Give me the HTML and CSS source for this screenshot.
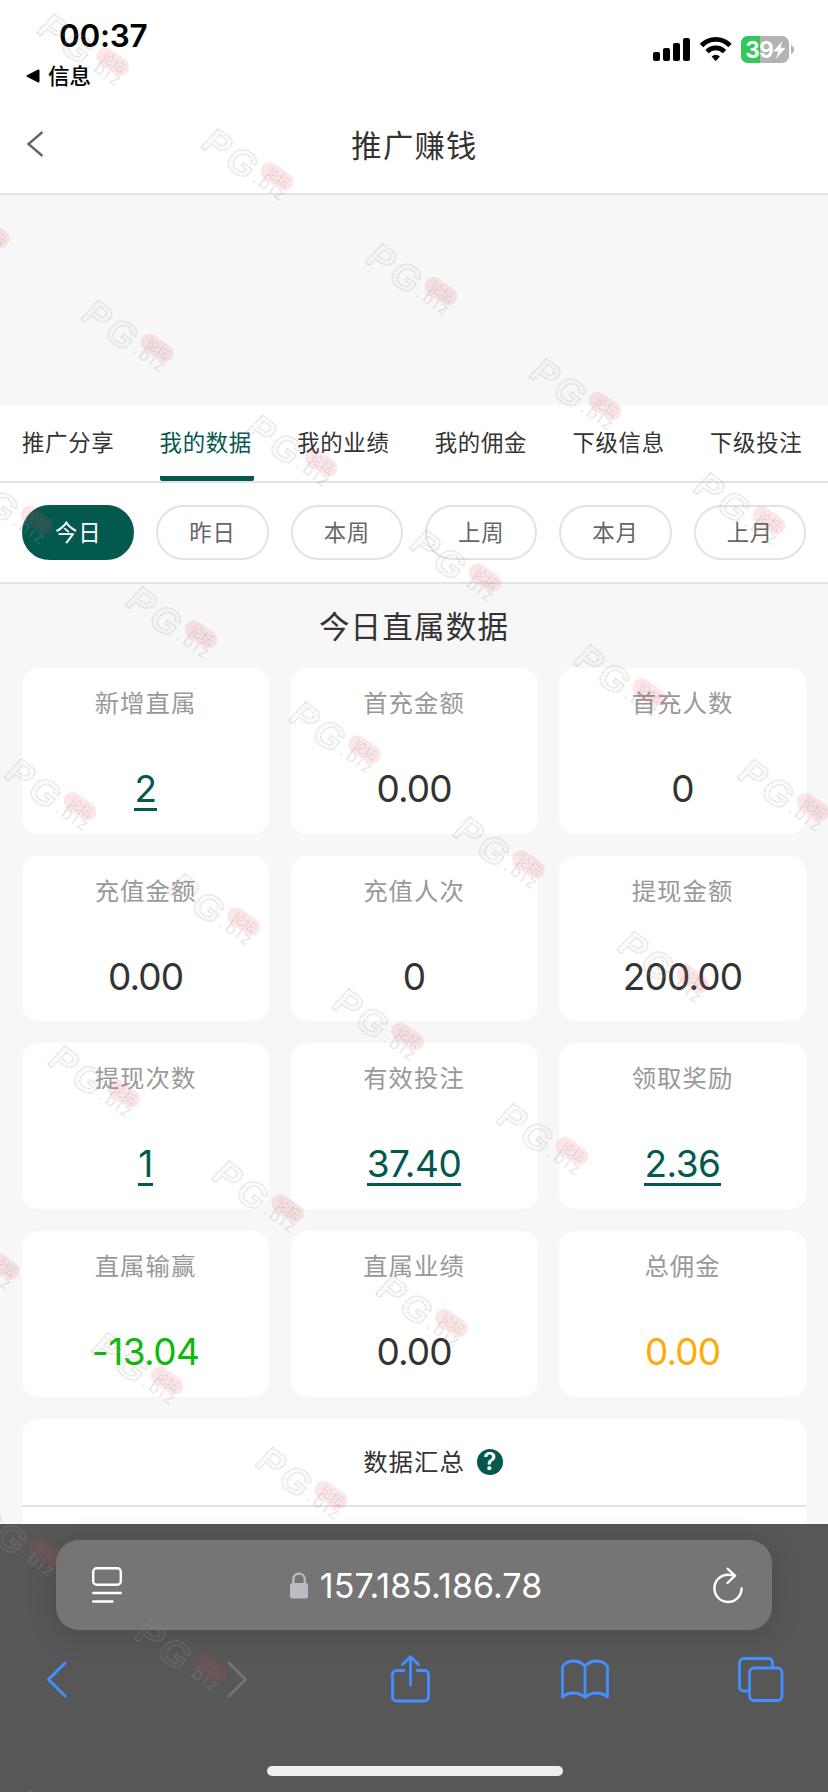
FILE: index.html
```html
<!DOCTYPE html>
<html lang="zh-CN">
<head>
<meta charset="utf-8">
<meta name="viewport" content="width=device-width">
<title>推广赚钱</title>
<link rel="stylesheet" href="styles.css">
</head>
<body>
<div class="screen">
  <header class="status">
    <div class="status-left">
      <div class="time">00:37</div>
      <div class="back-app">
        <svg width="14" height="14" viewBox="0 0 14 14"><path d="M1 6.2 11.6.8Q13.500 0 13.500 1.800v10.400q0 1.800-1.900 1L1 7.800Q-.4 7 1 6.200z" fill="#000"/></svg>
        <span>信息</span>
      </div>
    </div>
    <svg class="status-icons" width="142" height="28" viewBox="0 0 142 28">
      <rect x="0" y="16" width="7" height="9" rx="2"/><rect x="10" y="12" width="7" height="13" rx="2"/><rect x="20" y="7" width="7" height="18" rx="2"/><rect x="30" y="2" width="7" height="23" rx="2"/>
      <g fill="none" stroke="#000" stroke-width="4.800"><path d="M48.500 9.500C56.500 1.200 69 1.200 77 9.500"/><path d="M54 15.600C59 10.600 66.500 10.600 71.500 15.600"/></g>
      <path d="M58.600 20.500Q62.700 17 66.900 20.500L63.400 24.400Q62.700 25.200 62 24.400z"/>
      <rect x="88" y="0" width="48" height="27" rx="7" fill="#b3b3b3"/>
      <path d="M95 0H107V27H95A7 7 0 0 1 88 20V7A7 7 0 0 1 95 0z" fill="#34c759"/>
      <path d="M138 9Q141 10.500 141 13.500T138 18z" fill="#b3b3b3"/>
      <text class="battery" x="92.300" y="21.500">39</text>
      <path d="M129.500 5 121 14.500q-.6.9.4.9h4L123 22.500 132 12.700q.7-1-.5-1h-4z" fill="#fff"/>
    </svg>
  </header>
  <nav class="titlebar">
    <svg class="back" width="18" height="28" viewBox="0 0 18 28"><path d="M16.500 2 2.500 14l14 12" fill="none" stroke="#666" stroke-width="2.400"/></svg>
    <h1>推广赚钱</h1>
  </nav>
  <div class="banner"></div>
  <nav class="tabs">
    <span>推广分享</span><span class="active">我的数据</span><span>我的业绩</span><span>我的佣金</span><span>下级信息</span><span>下级投注</span>
  </nav>
  <div class="filters">
    <span class="on">今日</span><span>昨日</span><span>本周</span><span>上周</span><span>本月</span><span>上月</span>
  </div>
  <main>
    <h2>今日直属数据</h2>
    <div class="grid">
      <div class="card"><label>新增直属</label><b class="link">2</b></div>
      <div class="card"><label>首充金额</label><b>0.00</b></div>
      <div class="card"><label>首充人数</label><b>0</b></div>
      <div class="card"><label>充值金额</label><b>0.00</b></div>
      <div class="card"><label>充值人次</label><b>0</b></div>
      <div class="card"><label>提现金额</label><b>200.00</b></div>
      <div class="card"><label>提现次数</label><b class="link">1</b></div>
      <div class="card"><label>有效投注</label><b class="link">37.40</b></div>
      <div class="card"><label>领取奖励</label><b class="link">2.36</b></div>
      <div class="card"><label>直属输赢</label><b class="green">-13.04</b></div>
      <div class="card"><label>直属业绩</label><b>0.00</b></div>
      <div class="card"><label>总佣金</label><b class="orange">0.00</b></div>
    </div>
    <section class="summary">
      <div class="summary-head"><span>数据汇总</span><i>?</i></div>
    </section>
  </main>
  <footer class="browser">
    <div class="url">
      <svg width="30" height="36" viewBox="0 0 30 36" fill="none" stroke="#fff" stroke-width="2.400" stroke-linecap="round"><rect x="1.200" y="1.200" width="27.600" height="16.600" rx="3.500"/><path d="M1.200 26h27.600M1.200 34.500h19.300"/></svg>
      <div class="address">
        <svg width="18" height="27" viewBox="0 0 18 27"><path d="M3.300 13V7.500C3.300-.3 14.700-.3 14.700 7.500V13" fill="none" stroke="#bcbbc3" stroke-width="2.200"/><rect y="11" width="18" height="15.500" rx="2.500" fill="#bcbbc3"/></svg>
        <span>157.185.186.78</span>
      </div>
      <svg width="30" height="37" viewBox="0 0 30 37" fill="none" stroke="#fff" stroke-width="2.400" stroke-linecap="round" stroke-linejoin="round"><path d="M20.500 8.300Q18 7.800 15.500 7.800A13.600 13.600 0 1 0 28.600 21.500"/><path d="M14.500 1.700 22 8.600 14.500 16"/></svg>
    </div>
    <div class="tools">
      <svg width="21" height="37" viewBox="0 0 21 37"><path d="M19 2 2.500 18.500 19 35" fill="none" stroke="#438fff" stroke-width="3" stroke-linecap="round" stroke-linejoin="round"/></svg>
      <svg width="21" height="37" viewBox="0 0 21 37"><path d="M2 2 18.500 18.500 2 35" fill="none" stroke="#737373" stroke-width="3" stroke-linecap="round" stroke-linejoin="round"/></svg>
      <svg width="39" height="48" viewBox="0 0 39 48" fill="none" stroke="#438fff" stroke-width="2.800" stroke-linecap="round" stroke-linejoin="round"><path d="M13 15.500H6Q1.500 15.500 1.500 20V41.500Q1.500 46 6 46H33Q37.500 46 37.500 41.500V20Q37.500 15.500 33 15.500H26M19.500 30V2M11.500 9.500l8-8 8 8"/></svg>
      <svg width="48" height="40" viewBox="0 0 48 40" fill="none" stroke="#438fff" stroke-width="2.800" stroke-linecap="round" stroke-linejoin="round"><path d="M24 7Q19 2 12.500 2 5.500 2 1.500 7.500V38Q6 34 12.500 34 19 34 24 38.500 29 34 35.500 34 42 34 46.500 38V7.500Q42.500 2 35.500 2 29 2 24 7zV38"/></svg>
      <svg width="46" height="45" viewBox="0 0 46 45" fill="none" stroke="#438fff" stroke-width="2.800"><path d="M10.500 34H6Q1.500 34 1.500 29.500V6Q1.500 1.500 6 1.500H30Q34.500 1.500 34.500 6V10.500"/><rect x="11.500" y="11" width="32.500" height="32.500" rx="4.500"/></svg>
    </div>
    <div class="home"></div>
  </footer>

  <svg class="watermark" width="828" height="1792" viewBox="0 0 828 1792">
    <defs>
      <g id="wm">
        <text class="wm-big" transform="translate(-17 19) rotate(37) skewX(-6)">PG</text>
        <text class="wm-small" transform="translate(35 54) rotate(35)">.biz</text>
        <rect class="wm-pill" x="-18" y="-9" width="36" height="18" rx="9" transform="translate(61 49.500) rotate(35)"/>
        <text class="wm-cn" transform="translate(50.500 44) rotate(35)">论坛</text>
      </g>
    </defs>
    <use href="#wm" x="51.700" y="12.300"/><use href="#wm" x="216" y="127"/><use href="#wm" x="380" y="241.700"/><use href="#wm" x="544" y="356.500"/><use href="#wm" x="708" y="471"/>
    <use href="#wm" x="-68" y="184"/><use href="#wm" x="96" y="298.600"/><use href="#wm" x="260" y="413.300"/><use href="#wm" x="424" y="528"/><use href="#wm" x="588" y="643"/><use href="#wm" x="752" y="757.500"/>
    <use href="#wm" x="-24" y="470.500"/><use href="#wm" x="140" y="585"/><use href="#wm" x="303.500" y="700"/><use href="#wm" x="467.500" y="815"/><use href="#wm" x="632" y="929.500"/>
    <use href="#wm" x="19" y="757"/><use href="#wm" x="182.500" y="872"/><use href="#wm" x="346.500" y="987"/><use href="#wm" x="511" y="1101.500"/>
    <use href="#wm" x="62.500" y="1044"/><use href="#wm" x="226.500" y="1159"/><use href="#wm" x="390.500" y="1273.500"/>
    <use href="#wm" x="-58" y="1216"/><use href="#wm" x="106" y="1331"/><use href="#wm" x="270" y="1445.500"/>
    <use href="#wm" x="-15" y="1503"/><use href="#wm" x="149" y="1618"/><use href="#wm" x="28" y="1789"/>
  </svg>
</div>
</body>
</html>
```
FILE: styles.css
```css
* { box-sizing: border-box; }
body { margin: 0; background: #f7f7f7; color: #333; font-family: Inter, "Noto Sans CJK SC", sans-serif; }
svg { display: block; flex: none; }
.screen { position: relative; width: 828px; height: 1792px; overflow: hidden; display: flex; flex-direction: column; }

.status { height: 98px; flex: none; background: #fff; display: flex; justify-content: space-between; padding: 0 33px 0 26px; color: #000; }
.time { margin: 16px 0 0 33px; font-size: 31.5px; line-height: 40px; font-weight: 600; letter-spacing: -.3px; }
.back-app { display: flex; align-items: center; gap: 8px; margin-top: 7px; font-size: 21.5px; line-height: 26px; font-weight: 500; }
.status-icons { margin-top: 36px; }
.battery { font: 700 22.5px Inter, sans-serif; fill: #fff; letter-spacing: -.5px; }

.titlebar { height: 97px; flex: none; background: #fff; border-bottom: 2px solid #e3e3e3; display: flex; align-items: center; padding: 0 26px; }
.titlebar .back { margin-bottom: 3px; }
h1 { flex: 1; margin: 0 17px 4px 0; text-align: center; font-size: 30.3px; font-weight: 400; letter-spacing: 1.3px; }
.banner { height: 210px; flex: none; }

.tabs { height: 78px; flex: none; background: #fff; border-bottom: 2px solid #e3e3e3; display: flex; gap: 43.6px; padding-left: 22px; font-size: 22.4px; letter-spacing: .7px; line-height: 76px; }
.tabs span { width: 94px; flex: none; white-space: nowrap; }
.tabs .active { color: #04594f; background: linear-gradient(#04594f, #04594f) bottom / 100% 5px no-repeat; border-radius: 2px; }

.filters { height: 101px; flex: none; background: #fff; border-bottom: 2px solid #e3e3e3; display: grid; grid-template-columns: repeat(6, 1fr); gap: 22px; padding: 22px; color: #666; }
.filters span { height: 55px; line-height: 51px; border: 2px solid #e3e3e3; border-radius: 28px; text-align: center; font-size: 22.4px; letter-spacing: .8px; }
.filters .on { background: #04594f; border-color: #04594f; color: #fff; }

main { flex: 1; padding: 0 22px; min-height: 0; }
h2 { margin: 0; height: 84px; line-height: 86px; text-align: center; font-size: 30.5px; font-weight: 400; letter-spacing: 1.2px; }
.grid { display: grid; grid-template-columns: repeat(3, 1fr); grid-auto-rows: 165.7px; gap: 22px 21.5px; }
.card { background: #fff; border-radius: 16px; display: flex; flex-direction: column; align-items: center; padding-top: 17px; }
.card label { font-size: 24.4px; line-height: 36px; letter-spacing: 1px; color: #999; }
.card b { font-weight: 400; font-size: 37px; line-height: 44px; margin-top: 46px; letter-spacing: -.9px; }
.card .link { color: #04594f; height: 44px; border-bottom: 3px solid #04594f; letter-spacing: -.5px; }
.card .green { color: #0bb90b; letter-spacing: -.6px; }
.card .orange { color: #ffaa09; }
.summary { margin-top: 22px; height: 120px; background: #fff; border-radius: 16px 16px 0 0; }
.summary-head { height: 88px; border-bottom: 2px solid #e3e3e3; display: flex; align-items: center; justify-content: center; gap: 12px; font-size: 24.4px; letter-spacing: 1px; padding: 0 0 2px 38px; }
.summary-head i { width: 26px; height: 26px; border-radius: 50%; background: #04594f; color: #fff; font: 600 24px/25px Inter, sans-serif; text-align: center; letter-spacing: 0; margin-top: 3px; }

.browser { height: 268px; flex: none; background: #575757; padding: 16px 44px 0 46px; display: flex; flex-direction: column; position: relative; color: #fff; }
.url { margin: 0 12px 0 10px; height: 90px; border-radius: 23px; background: #757575; box-shadow: 0 4px 32px rgba(0,0,0,.14); display: flex; justify-content: space-between; align-items: center; padding: 0 29px 0 36px; }
.address { display: flex; align-items: center; gap: 12px; font-size: 34px; letter-spacing: .05px; margin-right: 3px; }
.tools { display: flex; align-items: center; height: 48px; margin-top: 25px; }
.tools svg:nth-child(2) { margin-left: 160px; }
.tools svg:nth-child(3) { margin-left: 143px; }
.tools svg:nth-child(4) { margin-left: 131px; }
.tools svg:nth-child(5) { margin-left: 129px; }
.home { width: 296px; height: 10px; border-radius: 5px; background: #eee; margin: 63px auto 0; }

.watermark { position: absolute; left: 0; top: 0; pointer-events: none; }
.wm-big { font: 700 37px "Liberation Sans", sans-serif; letter-spacing: 4px; fill: rgba(155,155,155,.03); stroke: rgba(155,155,155,.32); stroke-width: 1.7; stroke-dasharray: 1.5 1; }
.wm-small { font: 400 18px "Liberation Sans", sans-serif; letter-spacing: 2.500px; fill: rgba(155,155,155,.26); }
.wm-pill { fill: rgba(235,60,70,.13); }
.wm-cn { font: 400 13px "Noto Sans CJK SC", sans-serif; dominant-baseline: middle; fill: rgba(110,130,130,.22); }
```
